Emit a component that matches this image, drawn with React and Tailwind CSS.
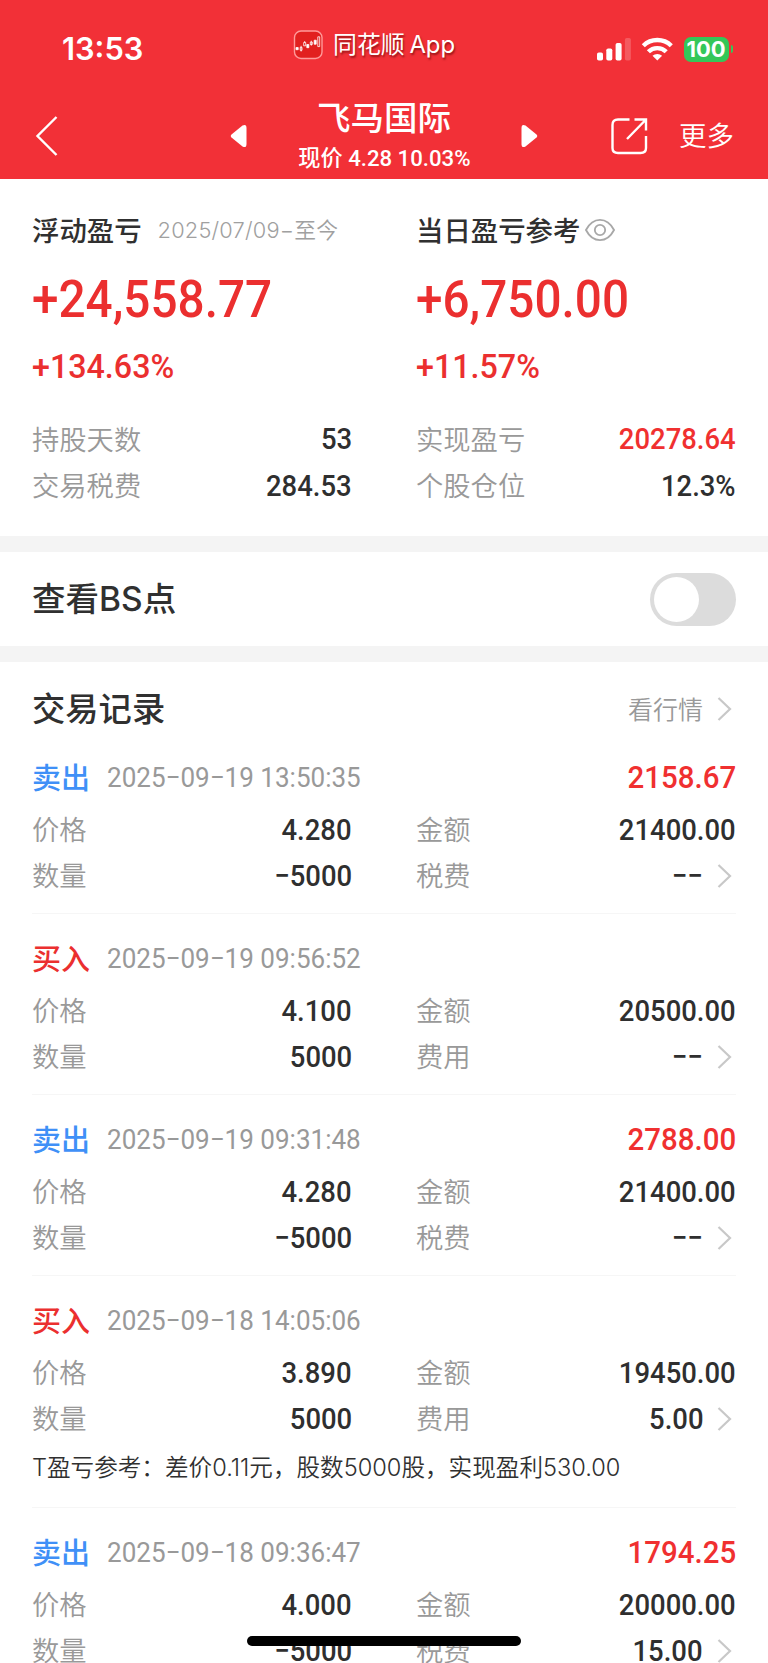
const CJK = "font-[Inter,'Noto_Sans_CJK_SC',sans-serif]";
const NUM = "font-[Roboto,'Noto_Sans_CJK_SC',sans-serif]";

const records = [
  { side: "卖出", time: "2025−09−19 13:50:35", profit: "2158.67", price: "4.280", qty: "−5000", amount: "21400.00", feeLabel: "税费", fee: "−−" },
  { side: "买入", time: "2025−09−19 09:56:52", price: "4.100", qty: "5000", amount: "20500.00", feeLabel: "费用", fee: "−−" },
  { side: "卖出", time: "2025−09−19 09:31:48", profit: "2788.00", price: "4.280", qty: "−5000", amount: "21400.00", feeLabel: "税费", fee: "−−" },
  { side: "买入", time: "2025−09−18 14:05:06", price: "3.890", qty: "5000", amount: "19450.00", feeLabel: "费用", fee: "5.00", note: "T盈亏参考：差价0.11元，股数5000股，实现盈利530.00" },
  { side: "卖出", time: "2025−09−18 09:36:47", profit: "1794.25", price: "4.000", qty: "−5000", amount: "20000.00", feeLabel: "税费", fee: "15.00" },
];

function Chevron() {
  return (
    <svg className="ml-[14px] mr-[4px] h-6 w-[15px] shrink-0" viewBox="0 0 15 24" fill="none" stroke="#c8c8c8" strokeWidth="2.2">
      <path d="M1.5 1 L13 12 L1.5 23" />
    </svg>
  );
}

function Field({ label, value, red, arrow }) {
  return (
    <div className="flex h-[46.5px] items-center">
      <span className="pt-[2px] text-[27.3px] font-[350] leading-none text-[#999]">{label}</span>
      <span className={`${NUM} ml-auto origin-right scale-x-[0.915] whitespace-nowrap text-[30px] font-medium leading-none ${red ? "text-[#f03030]" : "text-[#2f2f2f]"}`}>{value}</span>
      {arrow && <Chevron />}
    </div>
  );
}

function Summary({ title, extra, amount, percent, children }) {
  return (
    <div>
      <div className="flex h-[42px] items-center whitespace-nowrap">
        <span className="pt-[3px] text-[27.4px] font-medium leading-none text-[#303030]">{title}</span>
        {extra}
      </div>
      <div className={`${NUM} flex h-[96px] origin-left scale-x-[0.935] items-center whitespace-nowrap text-[51px] font-medium leading-none text-[#eb2f2f]`}>{amount}</div>
      <div className={`${NUM} flex h-[38px] origin-left scale-x-[0.948] items-center text-[34px] font-medium leading-none text-[#eb2f2f]`}>{percent}</div>
      <div className="mt-[31px]">{children}</div>
    </div>
  );
}

function Record({ r }) {
  const sell = r.side === "卖出";
  return (
    <div className="border-b border-[#f6f6f6] pb-[13.75px] pt-[18px]">
      <div className="flex h-[53px] items-center">
        <span className={`pt-px text-[29px] font-medium leading-none ${sell ? "text-[#3f90f7]" : "text-[#eb2f2f]"}`}>{r.side}</span>
        <span className={`${NUM} ml-[16.5px] origin-left scale-x-[0.93] whitespace-nowrap text-[28px] leading-none text-[#999]`}>{r.time}</span>
        {r.profit && <span className={`${NUM} ml-auto origin-right scale-x-[0.935] text-[31.5px] font-medium leading-none text-[#f03030]`}>{r.profit}</span>}
      </div>
      <div className="mt-[2.25px] grid grid-cols-2 gap-x-16">
        <Field label="价格" value={r.price} />
        <Field label="金额" value={r.amount} />
        <Field label="数量" value={r.qty} />
        <Field label={r.feeLabel} value={r.fee} arrow />
      </div>
      {r.note && <div className="flex h-[51px] items-center whitespace-nowrap text-[23.6px] font-[350] leading-none text-[#303030]">{r.note}</div>}
    </div>
  );
}

function StatusBar() {
  return (
    <div className="flex h-[90px] items-center pl-[62px] pr-[35px]">
      <span className="w-[231px] pt-[8px] text-[30.8px] font-semibold leading-none">13:53</span>
      <svg className="h-[30px] w-[30px] shrink-0" viewBox="0 0 30 30">
        <rect x="1.5" y="1" width="27.5" height="27.5" rx="6.5" fill="#e2201f" stroke="#ff9a9a" strokeWidth="1.4" />
        <g fill="#fff" stroke="#fff" strokeWidth="0.8">
          <path d="M3 17.5h2.2v2.2H3zM13.8 14.5h2v3.2h-2zM21.2 10.2h2v4h-2z" />
          <path fill="none" d="M7.2 17.3h1.8v3H7.2zM8.1 15.8v5.7M10.7 12.5h2v3.3h-2zM11.7 11v1.5M17.3 12h2v2.5h-2zM18.3 10.7v5M24.8 6.8h1.9v9.8h-1.9z" />
        </g>
      </svg>
      <span className="ml-[10px] whitespace-nowrap text-[23.9px] leading-none [text-shadow:1px_2px_2px_rgba(90,0,0,0.6)] [word-spacing:-2px]">同花顺 App</span>
      <div className="ml-auto flex items-center pt-[8px]">
        <svg className="h-6 w-[35px]" viewBox="0 0 35 24" fill="#fff">
          <rect x="0" y="15.5" width="6" height="8" rx="1.8" />
          <rect x="9.3" y="11.5" width="6" height="12" rx="1.8" />
          <rect x="18.6" y="6" width="6" height="17.5" rx="1.8" />
          <rect x="27.9" y="1" width="6" height="22.5" rx="1.8" opacity="0.2" />
        </svg>
        <svg className="ml-[9px] h-6 w-[33px]" viewBox="0 0 33 24">
          <g fill="none" stroke="#fff" strokeWidth="4.4">
            <path d="M2.3 8.7 A20 20 0 0 1 30.3 8.7" />
            <path d="M7.4 14.8 A12.6 12.6 0 0 1 25.2 14.8" />
          </g>
          <path d="M16.3 23.6 L11.5 18.8 A7 7 0 0 1 21.1 18.8 Z" fill="#fff" />
        </svg>
        <div className="ml-[10px] flex h-[25px] w-[45px] items-center justify-center rounded-[7px] bg-[#34c759] text-[22px] font-bold leading-none">100</div>
        <div className="ml-[2px] h-[8px] w-[2.5px] rounded-r-full bg-[#34c759]" />
      </div>
    </div>
  );
}

function NavBar() {
  return (
    <div className="flex h-[89px] items-center pl-[35px] pr-[34px] pt-[2px]">
      <svg className="h-[42px] w-[24px]" viewBox="0 0 24 42" fill="none" stroke="#fff" strokeWidth="2.4">
        <path d="M21.5 2 L2.5 21 L21.5 40" />
      </svg>
      <svg className="ml-[171px] h-[24px] w-[18px]" viewBox="0 0 18 24" fill="#fff">
        <path d="M1.5 10.5 L12.5 1.5 Q16.5 -0.5 16.5 4 V20 Q16.5 24.5 12.5 22.5 L1.5 13.5 Q0 12 1.5 10.5Z" />
      </svg>
      <div className="flex w-[272px] flex-col items-center whitespace-nowrap">
        <div className="flex h-[44px] items-center pt-[2px] text-[33.5px] font-medium leading-none">飞马国际</div>
        <div className={`${NUM} flex h-[36px] scale-x-[0.985] items-center pt-px text-[22.5px] font-medium leading-none`}>现价 4.28 10.03%</div>
      </div>
      <svg className="h-[24px] w-[18px]" viewBox="0 0 18 24" fill="#fff">
        <path d="M16.5 10.5 L5.5 1.5 Q1.5 -0.5 1.5 4 V20 Q1.5 24.5 5.5 22.5 L16.5 13.5 Q18 12 16.5 10.5Z" />
      </svg>
      <svg className="ml-auto h-[38px] w-[38px]" viewBox="0 0 38 38" fill="none" stroke="#fff" strokeWidth="2.4">
        <path d="M19.5 2.5 H8 Q2.5 2.5 2.5 8 V31 Q2.5 36 8 36 H30.5 Q36 36 36 31 V19" />
        <path d="M24.5 2.5 H36 V13.5 M35.5 3 L17 22" />
      </svg>
      <span className="ml-[31px] pt-[2px] text-[27.5px] font-[350] leading-none">更多</span>
    </div>
  );
}

export default function App() {
  return (
    <div className={`${CJK} relative h-[1663px] w-[768px] overflow-hidden bg-white`}>
      <header className="h-[179px] bg-[#f23037] text-white">
        <StatusBar />
        <NavBar />
      </header>
      <section className="grid h-[357px] grid-cols-2 gap-x-16 px-8 pt-[30px]">
        <Summary
          title="浮动盈亏"
          amount="+24,558.77"
          percent="+134.63%"
          extra={<span className="ml-[16px] pt-px text-[21.8px] font-[350] leading-none tracking-[0.2px] text-[#a0a0a0]">2025/07/09−至今</span>}
        >
          <Field label="持股天数" value="53" />
          <Field label="交易税费" value="284.53" />
        </Summary>
        <Summary
          title="当日盈亏参考"
          amount="+6,750.00"
          percent="+11.57%"
          extra={
            <svg className="ml-[4px] h-[24px] w-[32px]" viewBox="0 0 34 26" fill="none" stroke="#a8a8a8" strokeWidth="2">
              <path d="M1.8 13 Q7.5 2 17 2 T32.2 13 Q26.5 24 17 24 T1.8 13Z" />
              <circle cx="17" cy="13" r="5.6" />
            </svg>
          }
        >
          <Field label="实现盈亏" value="20278.64" red />
          <Field label="个股仓位" value="12.3%" />
        </Summary>
      </section>
      <section className="flex h-[126px] items-center justify-between border-y-[16px] border-[#f4f4f4] px-8">
        <span className="pt-[2px] text-[33.5px] font-medium leading-none text-[#303030]">查看BS点</span>
        <div className="flex h-[53px] w-[86px] items-center rounded-full bg-[#dcdcdc] pl-1">
          <div className="size-[45px] rounded-full bg-white" />
        </div>
      </section>
      <section className="px-8">
        <div className="flex h-[71px] items-center pt-[23px]">
          <span className="pt-[2px] text-[33.3px] font-medium leading-none text-[#303030]">交易记录</span>
          <span className="ml-auto pt-[2px] text-[25px] font-[350] leading-none text-[#999]">看行情</span>
          <Chevron />
        </div>
        {records.map((r) => (
          <Record key={r.time} r={r} />
        ))}
      </section>
      <div className="absolute left-[247px] top-[1636px] h-[10px] w-[274px] rounded-full bg-black" />
    </div>
  );
}
